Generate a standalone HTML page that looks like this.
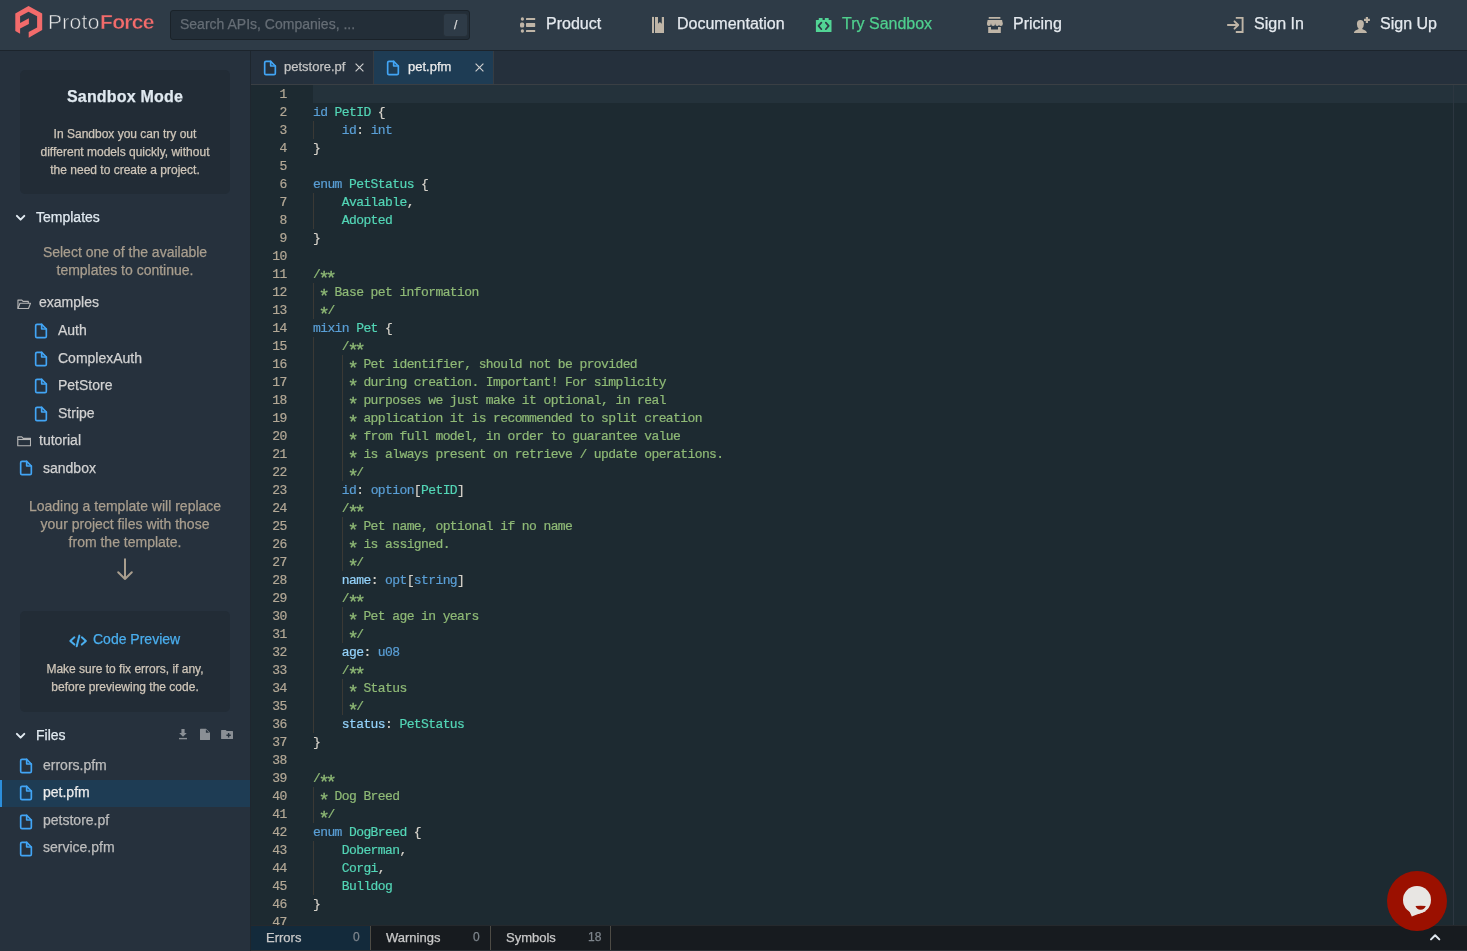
<!DOCTYPE html>
<html><head><meta charset="utf-8">
<style>
*{margin:0;padding:0;box-sizing:border-box}
html,body{width:1467px;height:951px;overflow:hidden;background:#26313d;font-family:"Liberation Sans",sans-serif;position:relative}
.abs{position:absolute}
.t{position:absolute;white-space:pre;line-height:1;will-change:transform;-webkit-text-stroke-width:0.25px}
.code{position:absolute;left:313px;top:85px;font-family:"Liberation Mono",monospace;font-size:13px;letter-spacing:-0.6px;line-height:18px;color:#d6d2ca;white-space:pre;will-change:transform;-webkit-text-stroke-width:0.2px}
.ln{position:absolute;left:251px;width:35.6px;top:85px;font-family:"Liberation Mono",monospace;font-size:13px;letter-spacing:-0.6px;line-height:18px;color:#b3a896;text-align:right;white-space:pre;will-change:transform;-webkit-text-stroke-width:0.2px}
.k{color:#5a9fd6}.ty{color:#53d6b6}.c{color:#8fba76}.f{color:#94d3fb}
.guide{position:absolute;width:1px;background:#3a3935}
.a{font-style:normal;display:inline-block;transform:translateY(4.3px) scale(1.45)}
</style></head><body>

<div class="abs" style="left:0;top:0;width:1467px;height:50px;background:#2e3b47"></div>
<div class="abs" style="left:0;top:50px;width:1467px;height:1px;background:#1c242c"></div>
<svg class="abs" style="left:0;top:0" width="50" height="50" viewBox="0 0 50 50"><path fill="#f36b6b" d="M28.5,6 L15.3,13.4 L15.3,31 L20.1,33.8 L20.1,28.5 L28.9,23.9 L28.9,18.2 L20.1,23 L20.1,16.3 L28.5,11.7 L37.1,16.3 L37.1,27.4 L28.7,32 L28.7,37.8 L42.2,30 L42.2,13.4 Z"/></svg>
<div class="t" style="left:47.80px;top:10.62px;font-size:21px;color:#e6e6e6;letter-spacing:0.3px;-webkit-text-stroke:0.55px #2e3b47;">Proto</div>
<div class="t" style="left:100.30px;top:10.62px;font-size:21px;color:#f36b6b;font-weight:bold;letter-spacing:-0.7px;-webkit-text-stroke:0.35px #2e3b47;">Force</div>
<div class="abs" style="left:170px;top:10px;width:300px;height:30px;background:#232e38;border:1px solid #1a2229;border-radius:3px"></div>
<div class="t" style="left:180.00px;top:17.15px;font-size:14px;color:#656d75;">Search APIs, Companies, ...</div>
<div class="abs" style="left:443px;top:13px;width:25px;height:24px;background:#2e3b47;border:1px solid #263039;border-radius:3px"></div>
<div class="t" style="left:453.50px;top:18.84px;font-size:12px;color:#d8d8d8;">/</div>
<div class="t" style="left:545.80px;top:16.16px;font-size:16px;color:#e4e9ee;">Product</div>
<div class="t" style="left:676.50px;top:16.16px;font-size:16px;color:#e4e9ee;">Documentation</div>
<div class="t" style="left:842.00px;top:16.16px;font-size:16px;color:#4fd08e;">Try Sandbox</div>
<div class="t" style="left:1012.80px;top:16.16px;font-size:16px;color:#e4e9ee;">Pricing</div>
<div class="t" style="left:1253.70px;top:16.16px;font-size:16px;color:#e4e9ee;">Sign In</div>
<div class="t" style="left:1380.20px;top:16.16px;font-size:16px;color:#e4e9ee;">Sign Up</div>
<svg class="abs" style="left:518px;top:14px" width="20" height="22" viewBox="518 14 20 22" ><g fill="#bfb5a7"><ellipse cx="522.4" cy="19" rx="1.65" ry="1.8"/><rect x="520" y="22.6" width="4.2" height="4.9" rx="1.6"/><ellipse cx="522.4" cy="31" rx="1.65" ry="1.8"/><rect x="526" y="18" width="9.2" height="1.9" rx="0.5"/><rect x="526" y="23.1" width="9.2" height="3.8" rx="0.6"/><rect x="526" y="30" width="9.2" height="2" rx="0.5"/></g></svg>
<svg class="abs" style="left:650px;top:15px" width="16" height="20" viewBox="650 15 16 20" ><g fill="#bfb5a7"><rect x="652" y="16.9" width="2" height="16.15"/><path d="M655,16.9 H658 V23.75 L659.9,22.1 L661.8,23.75 V16.9 H664 V33.05 H655 Z"/></g></svg>
<svg class="abs" style="left:814px;top:16px" width="20" height="18" viewBox="814 16 20 18" ><g fill="#52d495"><rect x="818.75" y="17.9" width="3.85" height="2.5" rx="0.4"/><rect x="824.8" y="17.9" width="3.9" height="2.5" rx="0.4"/><rect x="815.9" y="19.9" width="15.6" height="12.2" rx="0.5"/></g><path d="M821.4,22.6 L818.5,25.9 L821.4,29.2 M825.8,22.6 L828.7,25.9 L825.8,29.2" fill="none" stroke="#2e3a46" stroke-width="1.7" stroke-linecap="round" stroke-linejoin="round"/></svg>
<svg class="abs" style="left:985px;top:15px" width="20" height="20" viewBox="985 15 20 20" ><g fill="#bfb5a7"><rect x="988.7" y="16.9" width="11.7" height="1.9" rx="0.3"/><path d="M987.6,19.9 H1002.1 L1002.7,23.8 H987 Z"/><circle cx="988.9" cy="24" r="2"/><circle cx="993.1" cy="24" r="2"/><circle cx="997.2" cy="24" r="2"/><circle cx="1000.8" cy="24" r="2"/><path d="M988.2,26.9 H991 V29.5 H998 V26.9 H1000.8 V33 H988.2 Z"/></g></svg>
<svg class="abs" style="left:1226px;top:15px" width="20" height="20" viewBox="1226 15 20 20" ><g fill="none" stroke="#bfb5a7" stroke-width="1.9"><path d="M1235.8,17.9 H1242.6 V32 H1235.8"/><path d="M1227.9,25 H1237.5 M1234.5,21.3 L1238.2,25 L1234.5,28.7" stroke-linecap="round" stroke-linejoin="round"/></g></svg>
<svg class="abs" style="left:1352px;top:15px" width="20" height="20" viewBox="1352 15 20 20" ><g fill="#bfb5a7"><path d="M1360.4,19.9 Q1363.9,19.9 1363.9,24 Q1363.9,27 1362.2,28.4 Q1362.3,29.3 1363.2,29.6 Q1366.9,30.9 1366.9,33.05 H1353.9 Q1353.9,30.9 1357.6,29.6 Q1358.5,29.3 1358.6,28.4 Q1356.9,27 1356.9,24 Q1356.9,19.9 1360.4,19.9 Z"/><path d="M1365.8,16.9 H1368 V18.8 H1369.9 V21 H1368 V22.9 H1365.8 V21 H1364 V18.8 H1365.8 Z"/></g></svg>
<div class="abs" style="left:250px;top:51px;width:1px;height:900px;background:#1e262e"></div>
<div class="abs" style="left:20px;top:70px;width:210px;height:124px;background:#222c36;border-radius:5px"></div>
<div class="t" style="left:20.00px;width:210px;text-align:center;top:88.76px;font-size:16px;color:#e0e9f0;font-weight:bold;letter-spacing:0.2px;">Sandbox Mode</div>
<div class="t" style="left:20.00px;width:210px;text-align:center;top:128.24px;font-size:12px;color:#cfc6b9;">In Sandbox you can try out</div>
<div class="t" style="left:20.00px;width:210px;text-align:center;top:146.04px;font-size:12px;color:#cfc6b9;">different models quickly, without</div>
<div class="t" style="left:20.00px;width:210px;text-align:center;top:163.84px;font-size:12px;color:#cfc6b9;">the need to create a project.</div>
<svg class="abs" style="left:14.5px;top:213.8px" width="12" height="8" viewBox="14.5 213.8 12 8" fill="none" stroke="#e2ebf2" stroke-width="2" stroke-linecap="round" stroke-linejoin="round"><path d="M16.4,215.7 L20.1,219.4 L23.8,215.7"/></svg>
<div class="t" style="left:36.20px;top:210.15px;font-size:14px;color:#e0e9f0;">Templates</div>
<div class="t" style="left:20.00px;width:210px;text-align:center;top:245.05px;font-size:14px;color:#a99e8e;">Select one of the available</div>
<div class="t" style="left:20.00px;width:210px;text-align:center;top:262.95px;font-size:14px;color:#a99e8e;">templates to continue.</div>
<svg class="abs" style="left:16.6px;top:298.7px" width="14.3" height="10.2" viewBox="0 0 15 11" fill="none" stroke="#b5b5b5" stroke-width="1.2" stroke-linejoin="round"><path d="M0.8,10.2 V1.2 H5 L6.3,2.6 H12 V4.6"/><path d="M0.8,10.2 L3,4.6 H14.4 L12.2,10.2 Z"/></svg>
<div class="t" style="left:39.10px;top:294.75px;font-size:14px;color:#d2d2d2;">examples</div>
<svg class="abs" style="left:33.00px;top:323.43px" width="16" height="16" viewBox="0 0 24 24" fill="none" stroke="#42a5f5" stroke-width="2.5" stroke-linecap="round" stroke-linejoin="round"><path d="M13 2H6a2 2 0 0 0-2 2v16a2 2 0 0 0 2 2h12a2 2 0 0 0 2-2V9z"/><polyline points="13 2 13 9 20 9"/></svg>
<div class="t" style="left:58.20px;top:323.15px;font-size:14px;color:#d2d2d2;">Auth</div>
<svg class="abs" style="left:33.00px;top:351.13px" width="16" height="16" viewBox="0 0 24 24" fill="none" stroke="#42a5f5" stroke-width="2.5" stroke-linecap="round" stroke-linejoin="round"><path d="M13 2H6a2 2 0 0 0-2 2v16a2 2 0 0 0 2 2h12a2 2 0 0 0 2-2V9z"/><polyline points="13 2 13 9 20 9"/></svg>
<div class="t" style="left:58.20px;top:350.85px;font-size:14px;color:#d2d2d2;">ComplexAuth</div>
<svg class="abs" style="left:33.00px;top:378.43px" width="16" height="16" viewBox="0 0 24 24" fill="none" stroke="#42a5f5" stroke-width="2.5" stroke-linecap="round" stroke-linejoin="round"><path d="M13 2H6a2 2 0 0 0-2 2v16a2 2 0 0 0 2 2h12a2 2 0 0 0 2-2V9z"/><polyline points="13 2 13 9 20 9"/></svg>
<div class="t" style="left:58.20px;top:378.15px;font-size:14px;color:#d2d2d2;">PetStore</div>
<svg class="abs" style="left:33.00px;top:405.83px" width="16" height="16" viewBox="0 0 24 24" fill="none" stroke="#42a5f5" stroke-width="2.5" stroke-linecap="round" stroke-linejoin="round"><path d="M13 2H6a2 2 0 0 0-2 2v16a2 2 0 0 0 2 2h12a2 2 0 0 0 2-2V9z"/><polyline points="13 2 13 9 20 9"/></svg>
<div class="t" style="left:58.20px;top:405.55px;font-size:14px;color:#d2d2d2;">Stripe</div>
<svg class="abs" style="left:16.6px;top:436.4px" width="14.3" height="10.6" viewBox="0 0 15 11" fill="none" stroke="#b5b5b5" stroke-width="1.2" stroke-linejoin="round"><path d="M0.8,10.2 V0.8 H5 L6.5,2.4 H14.2 V10.2 Z"/><path d="M0.8,3.6 H14.2"/></svg>
<div class="t" style="left:39.10px;top:432.95px;font-size:14px;color:#d2d2d2;">tutorial</div>
<svg class="abs" style="left:18.00px;top:460.33px" width="16" height="16" viewBox="0 0 24 24" fill="none" stroke="#42a5f5" stroke-width="2.5" stroke-linecap="round" stroke-linejoin="round"><path d="M13 2H6a2 2 0 0 0-2 2v16a2 2 0 0 0 2 2h12a2 2 0 0 0 2-2V9z"/><polyline points="13 2 13 9 20 9"/></svg>
<div class="t" style="left:43.00px;top:460.65px;font-size:14px;color:#d2d2d2;">sandbox</div>
<div class="t" style="left:20.00px;width:210px;text-align:center;top:498.85px;font-size:14px;color:#a99e8e;">Loading a template will replace</div>
<div class="t" style="left:20.00px;width:210px;text-align:center;top:516.95px;font-size:14px;color:#a99e8e;">your project files with those</div>
<div class="t" style="left:20.00px;width:210px;text-align:center;top:535.05px;font-size:14px;color:#a99e8e;">from the template.</div>
<svg class="abs" style="left:116px;top:558px" width="18" height="23" viewBox="0 0 18 23" fill="none" stroke="#a99e8e" stroke-width="2" stroke-linecap="round" stroke-linejoin="round"><path d="M9,1.2 V21 M2.2,14.2 L9,21 L15.8,14.2"/></svg>
<div class="abs" style="left:20px;top:611px;width:210px;height:101px;background:#222c36;border-radius:5px"></div>
<svg class="abs" style="left:66px;top:632px" width="24" height="17" viewBox="66 632 24 17" ><path d="M74.4,637.3 L70.3,640.95 L74.4,644.6 M81.8,637.3 L85.9,640.95 L81.8,644.6 M79.4,635.6 L76.7,646.3" fill="none" stroke="#4aaeee" stroke-width="2" stroke-linecap="round" stroke-linejoin="round"/></svg>
<div class="t" style="left:93.00px;top:632.25px;font-size:14px;color:#4aaeee;">Code Preview</div>
<div class="t" style="left:20.00px;width:210px;text-align:center;top:663.34px;font-size:12px;color:#cfc6b9;">Make sure to fix errors, if any,</div>
<div class="t" style="left:20.00px;width:210px;text-align:center;top:681.04px;font-size:12px;color:#cfc6b9;">before previewing the code.</div>
<svg class="abs" style="left:14.5px;top:732.3px" width="12" height="8" viewBox="14.5 213.8 12 8" fill="none" stroke="#e2ebf2" stroke-width="2" stroke-linecap="round" stroke-linejoin="round"><path d="M16.4,215.7 L20.1,219.4 L23.8,215.7"/></svg>
<div class="t" style="left:36.30px;top:728.25px;font-size:14px;color:#e0e9f0;">Files</div>
<svg class="abs" style="left:177px;top:727px" width="12" height="14" viewBox="177 727 12 14" ><g fill="#8a8f95"><path d="M181.4,729 H184.6 V733 H186.8 L183,736.8 L179.2,733 H181.4 Z"/><rect x="179" y="737.9" width="8" height="1.4"/></g></svg>
<svg class="abs" style="left:198px;top:727px" width="14" height="15" viewBox="198 727 14 15" ><path fill="#8a8f95" d="M200.6,728.7 H206 L210,732.7 V739.4 Q210,740 209.4,740 H200.6 Q200,740 200,739.4 V729.3 Q200,728.7 200.6,728.7 Z"/><path fill="#26313d" d="M205.9,729.6 V732.8 H209.1 Z"/></svg>
<svg class="abs" style="left:219px;top:728px" width="16" height="13" viewBox="219 728 16 13" ><path fill="#8a8f95" d="M221.6,729.9 H225.6 L226.8,731 H232.4 Q233,731 233,731.6 V738.4 Q233,739 232.4,739 H221.7 Q221.1,739 221.1,738.4 V730.4 Q221.1,729.9 221.6,729.9 Z"/><path d="M228.6,733 V737.4 M226.4,735.2 H230.8" stroke="#26313d" stroke-width="1.4"/></svg>
<div class="abs" style="left:0;top:780px;width:250px;height:27px;background:#1e3c54"></div>
<div class="abs" style="left:0;top:780px;width:2px;height:27px;background:#2c8fdc"></div>
<svg class="abs" style="left:18.00px;top:758.23px" width="16" height="16" viewBox="0 0 24 24" fill="none" stroke="#42a5f5" stroke-width="2.5" stroke-linecap="round" stroke-linejoin="round"><path d="M13 2H6a2 2 0 0 0-2 2v16a2 2 0 0 0 2 2h12a2 2 0 0 0 2-2V9z"/><polyline points="13 2 13 9 20 9"/></svg>
<div class="t" style="left:43.00px;top:757.95px;font-size:14px;color:#bdbdbd;">errors.pfm</div>
<svg class="abs" style="left:18.00px;top:785.13px" width="16" height="16" viewBox="0 0 24 24" fill="none" stroke="#42a5f5" stroke-width="2.5" stroke-linecap="round" stroke-linejoin="round"><path d="M13 2H6a2 2 0 0 0-2 2v16a2 2 0 0 0 2 2h12a2 2 0 0 0 2-2V9z"/><polyline points="13 2 13 9 20 9"/></svg>
<div class="t" style="left:43.00px;top:784.85px;font-size:14px;color:#ececec;">pet.pfm</div>
<svg class="abs" style="left:18.00px;top:813.63px" width="16" height="16" viewBox="0 0 24 24" fill="none" stroke="#42a5f5" stroke-width="2.5" stroke-linecap="round" stroke-linejoin="round"><path d="M13 2H6a2 2 0 0 0-2 2v16a2 2 0 0 0 2 2h12a2 2 0 0 0 2-2V9z"/><polyline points="13 2 13 9 20 9"/></svg>
<div class="t" style="left:43.00px;top:813.35px;font-size:14px;color:#bdbdbd;">petstore.pf</div>
<svg class="abs" style="left:18.00px;top:840.63px" width="16" height="16" viewBox="0 0 24 24" fill="none" stroke="#42a5f5" stroke-width="2.5" stroke-linecap="round" stroke-linejoin="round"><path d="M13 2H6a2 2 0 0 0-2 2v16a2 2 0 0 0 2 2h12a2 2 0 0 0 2-2V9z"/><polyline points="13 2 13 9 20 9"/></svg>
<div class="t" style="left:43.00px;top:840.35px;font-size:14px;color:#bdbdbd;">service.pfm</div>
<div class="abs" style="left:251px;top:51px;width:1216px;height:33px;background:#25303c"></div>
<div class="abs" style="left:251px;top:84px;width:1216px;height:1px;background:#3a3f44"></div>
<div class="abs" style="left:251px;top:85px;width:1216px;height:841px;background:#1d2a31"></div>
<div class="abs" style="left:373px;top:51px;width:1px;height:33px;background:#363c42"></div>
<div class="abs" style="left:374px;top:51px;width:119px;height:33px;background:#1e3c54"></div>
<div class="abs" style="left:493px;top:51px;width:1px;height:33px;background:#363c42"></div>
<svg class="abs" style="left:262.00px;top:59.83px" width="16" height="16" viewBox="0 0 24 24" fill="none" stroke="#42a5f5" stroke-width="2.5" stroke-linecap="round" stroke-linejoin="round"><path d="M13 2H6a2 2 0 0 0-2 2v16a2 2 0 0 0 2 2h12a2 2 0 0 0 2-2V9z"/><polyline points="13 2 13 9 20 9"/></svg>
<div class="t" style="left:284.00px;top:59.90px;font-size:13px;color:#c4c4c4;">petstore.pf</div>
<svg class="abs" style="left:385.00px;top:59.83px" width="16" height="16" viewBox="0 0 24 24" fill="none" stroke="#42a5f5" stroke-width="2.5" stroke-linecap="round" stroke-linejoin="round"><path d="M13 2H6a2 2 0 0 0-2 2v16a2 2 0 0 0 2 2h12a2 2 0 0 0 2-2V9z"/><polyline points="13 2 13 9 20 9"/></svg>
<div class="t" style="left:407.50px;top:59.90px;font-size:13px;color:#ececec;">pet.pfm</div>
<svg class="abs" style="left:355.2px;top:63.2px" width="9" height="9" viewBox="0 0 9 9" stroke="#cfcfcf" stroke-width="1.15"><path d="M0.6,0.6 L8.4,8.4 M8.4,0.6 L0.6,8.4"/></svg>
<svg class="abs" style="left:475px;top:63.2px" width="9" height="9" viewBox="0 0 9 9" stroke="#cfcfcf" stroke-width="1.15"><path d="M0.6,0.6 L8.4,8.4 M8.4,0.6 L0.6,8.4"/></svg>
<div class="abs" style="left:313px;top:85px;width:1154px;height:18px;background:#24323b"></div>
<div class="abs" style="left:1453px;top:85px;width:1px;height:841px;background:#2c3640"></div>
<div class="guide" style="left:313px;top:121px;height:18px"></div>
<div class="guide" style="left:313px;top:193px;height:36px"></div>
<div class="guide" style="left:313px;top:283px;height:36px"></div>
<div class="guide" style="left:313px;top:337px;height:396px"></div>
<div class="guide" style="left:342px;top:355px;height:126px"></div>
<div class="guide" style="left:342px;top:517px;height:54px"></div>
<div class="guide" style="left:342px;top:607px;height:36px"></div>
<div class="guide" style="left:342px;top:679px;height:36px"></div>
<div class="guide" style="left:313px;top:787px;height:36px"></div>
<div class="guide" style="left:313px;top:841px;height:54px"></div>
<div style="position:absolute;left:251px;top:86px;width:1202px;height:840px;overflow:hidden">
<div class="ln" style="left:0;top:0">1
2
3
4
5
6
7
8
9
10
11
12
13
14
15
16
17
18
19
20
21
22
23
24
25
26
27
28
29
30
31
32
33
34
35
36
37
38
39
40
41
42
43
44
45
46
47
48</div>
<div class="code" style="left:62px;top:0">
<span class="k">id</span> <span class="ty">PetID</span> {
    <span class="k">id</span>: <span class="k">int</span>
}

<span class="k">enum</span> <span class="ty">PetStatus</span> {
    <span class="ty">Available</span>,
    <span class="ty">Adopted</span>
}

<span class="c">/<i class="a">*</i><i class="a">*</i></span>
<span class="c"> <i class="a">*</i> Base pet information</span>
<span class="c"> <i class="a">*</i>/</span>
<span class="k">mixin</span> <span class="ty">Pet</span> {
    <span class="c">/<i class="a">*</i><i class="a">*</i></span>
<span class="c">     <i class="a">*</i> Pet identifier, should not be provided</span>
<span class="c">     <i class="a">*</i> during creation. Important! For simplicity</span>
<span class="c">     <i class="a">*</i> purposes we just make it optional, in real</span>
<span class="c">     <i class="a">*</i> application it is recommended to split creation</span>
<span class="c">     <i class="a">*</i> from full model, in order to guarantee value</span>
<span class="c">     <i class="a">*</i> is always present on retrieve / update operations.</span>
<span class="c">     <i class="a">*</i>/</span>
    <span class="k">id</span>: <span class="k">option</span>[<span class="ty">PetID</span>]
    <span class="c">/<i class="a">*</i><i class="a">*</i></span>
<span class="c">     <i class="a">*</i> Pet name, optional if no name</span>
<span class="c">     <i class="a">*</i> is assigned.</span>
<span class="c">     <i class="a">*</i>/</span>
    <span class="f">name</span>: <span class="k">opt</span>[<span class="k">string</span>]
    <span class="c">/<i class="a">*</i><i class="a">*</i></span>
<span class="c">     <i class="a">*</i> Pet age in years</span>
<span class="c">     <i class="a">*</i>/</span>
    <span class="f">age</span>: <span class="k">u08</span>
    <span class="c">/<i class="a">*</i><i class="a">*</i></span>
<span class="c">     <i class="a">*</i> Status</span>
<span class="c">     <i class="a">*</i>/</span>
    <span class="f">status</span>: <span class="ty">PetStatus</span>
}

<span class="c">/<i class="a">*</i><i class="a">*</i></span>
<span class="c"> <i class="a">*</i> Dog Breed</span>
<span class="c"> <i class="a">*</i>/</span>
<span class="k">enum</span> <span class="ty">DogBreed</span> {
    <span class="ty">Doberman</span>,
    <span class="ty">Corgi</span>,
    <span class="ty">Bulldog</span>
}
</div>
</div>
<div class="abs" style="left:251px;top:925px;width:1216px;height:1px;background:#25292d"></div>
<div class="abs" style="left:251px;top:926px;width:1216px;height:24px;background:#171b1f"></div>
<div class="abs" style="left:251px;top:950px;width:1216px;height:1px;background:#2b3035"></div>
<div class="abs" style="left:251px;top:926px;width:119px;height:24px;background:#132a3b"></div>
<div class="abs" style="left:370px;top:926px;width:1px;height:24px;background:#4d4b45"></div>
<div class="abs" style="left:490px;top:926px;width:1px;height:24px;background:#4d4b45"></div>
<div class="abs" style="left:610px;top:926px;width:1px;height:24px;background:#4d4b45"></div>
<div class="t" style="left:266.20px;top:930.70px;font-size:13px;color:#c9c9c9;">Errors</div>
<div class="t" style="left:386.20px;top:930.70px;font-size:13px;color:#c9c9c9;">Warnings</div>
<div class="t" style="left:506.00px;top:930.70px;font-size:13px;color:#c9c9c9;">Symbols</div>
<div class="t" style="left:352.50px;top:931.34px;font-size:12px;color:#7e858c;">0</div>
<div class="t" style="left:472.50px;top:931.34px;font-size:12px;color:#7e858c;">0</div>
<div class="t" style="left:587.50px;top:931.34px;font-size:12px;color:#7e858c;">18</div>
<svg class="abs" style="left:1428px;top:932px" width="14" height="10" viewBox="1428 932 14 10" ><path d="M1431,939.4 L1435.15,935.2 L1439.3,939.4" fill="none" stroke="#e0e8f0" stroke-width="2" stroke-linecap="round" stroke-linejoin="round"/></svg>
<div class="abs" style="left:1387px;top:871px;width:60px;height:60px;border-radius:50%;background:#9b1000"></div>
<svg class="abs" style="left:1395px;top:880px" width="45" height="40" viewBox="1395 880 45 40" ><circle cx="1417" cy="899.9" r="14" fill="#e8e6e3"/><path d="M1409.3,911 L1411.8,916.6 L1426,911 Z" fill="#e8e6e3"/><path d="M1415.5,906.1 Q1420.6,905.4 1425.8,906.1 Q1424.6,909.7 1420.6,909.7 Q1416.7,909.7 1415.5,906.1 Z" fill="#9b1000"/></svg>
</body></html>
